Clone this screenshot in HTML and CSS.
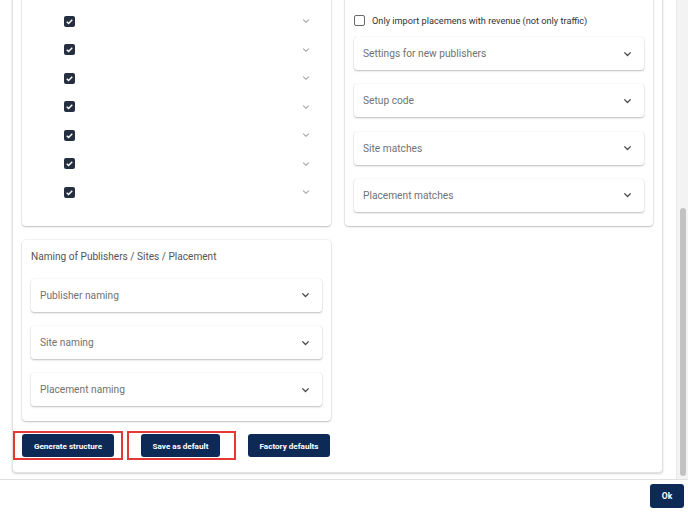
FILE: index.html
```html
<!DOCTYPE html>
<html>
<head>
<meta charset="utf-8">
<link rel="stylesheet" href="styles.css">
</head>
<body>
<div class="dialog">
  <div class="viewport">
    <div class="scroller">
      <div class="outer">
        <div class="grid">
          <div class="card card-checks">
            <div class="check-row"><span class="cb cb-on"><svg viewBox="0 0 12 12"><path d="M3 6.2l2 2 4-4.2" /></svg></span><svg class="chev chev-light" viewBox="0 0 10 6"><path d="M1.5 1.2l3.5 3.5 3.5-3.5"/></svg></div>
            <div class="check-row"><span class="cb cb-on"><svg viewBox="0 0 12 12"><path d="M3 6.2l2 2 4-4.2" /></svg></span><svg class="chev chev-light" viewBox="0 0 10 6"><path d="M1.5 1.2l3.5 3.5 3.5-3.5"/></svg></div>
            <div class="check-row"><span class="cb cb-on"><svg viewBox="0 0 12 12"><path d="M3 6.2l2 2 4-4.2" /></svg></span><svg class="chev chev-light" viewBox="0 0 10 6"><path d="M1.5 1.2l3.5 3.5 3.5-3.5"/></svg></div>
            <div class="check-row"><span class="cb cb-on"><svg viewBox="0 0 12 12"><path d="M3 6.2l2 2 4-4.2" /></svg></span><svg class="chev chev-light" viewBox="0 0 10 6"><path d="M1.5 1.2l3.5 3.5 3.5-3.5"/></svg></div>
            <div class="check-row"><span class="cb cb-on"><svg viewBox="0 0 12 12"><path d="M3 6.2l2 2 4-4.2" /></svg></span><svg class="chev chev-light" viewBox="0 0 10 6"><path d="M1.5 1.2l3.5 3.5 3.5-3.5"/></svg></div>
            <div class="check-row"><span class="cb cb-on"><svg viewBox="0 0 12 12"><path d="M3 6.2l2 2 4-4.2" /></svg></span><svg class="chev chev-light" viewBox="0 0 10 6"><path d="M1.5 1.2l3.5 3.5 3.5-3.5"/></svg></div>
            <div class="check-row"><span class="cb cb-on"><svg viewBox="0 0 12 12"><path d="M3 6.2l2 2 4-4.2" /></svg></span><svg class="chev chev-light" viewBox="0 0 10 6"><path d="M1.5 1.2l3.5 3.5 3.5-3.5"/></svg></div>
          </div>

          <div class="card card-right">
            <label class="opt-row"><span class="cb cb-off"></span><span class="opt-label">Only import placemens with revenue (not only traffic)</span></label>
            <div class="panels">
              <div class="panel"><span>Settings for new publishers</span><svg class="chev" viewBox="0 0 10 6"><path d="M1.5 1.2l3.5 3.5 3.5-3.5"/></svg></div>
              <div class="panel"><span>Setup code</span><svg class="chev" viewBox="0 0 10 6"><path d="M1.5 1.2l3.5 3.5 3.5-3.5"/></svg></div>
              <div class="panel"><span>Site matches</span><svg class="chev" viewBox="0 0 10 6"><path d="M1.5 1.2l3.5 3.5 3.5-3.5"/></svg></div>
              <div class="panel"><span>Placement matches</span><svg class="chev" viewBox="0 0 10 6"><path d="M1.5 1.2l3.5 3.5 3.5-3.5"/></svg></div>
            </div>
          </div>

          <div class="card card-naming">
            <div class="card-title">Naming of Publishers / Sites / Placement</div>
            <div class="panels">
              <div class="panel"><span>Publisher naming</span><svg class="chev" viewBox="0 0 10 6"><path d="M1.5 1.2l3.5 3.5 3.5-3.5"/></svg></div>
              <div class="panel"><span>Site naming</span><svg class="chev" viewBox="0 0 10 6"><path d="M1.5 1.2l3.5 3.5 3.5-3.5"/></svg></div>
              <div class="panel"><span>Placement naming</span><svg class="chev" viewBox="0 0 10 6"><path d="M1.5 1.2l3.5 3.5 3.5-3.5"/></svg></div>
            </div>
          </div>
        </div>

        <div class="actions">
          <span class="mark mark-1"><button class="btn btn-gen">Generate structure</button></span>
          <span class="mark mark-2"><button class="btn btn-save">Save as default</button></span>
          <button class="btn btn-factory">Factory defaults</button>
        </div>
      </div>
    </div>
    <div class="scrollbar"><div class="thumb"></div></div>
  </div>
  <div class="footer">
    <button class="btn btn-ok">Ok</button>
  </div>
</div>
</body>
</html>
```

FILE: styles.css
```css
* { box-sizing: border-box; }
html, body { margin: 0; padding: 0; background: #fff; }
body {
  width: 688px;
  height: 512px;
  overflow: hidden;
  font-family: Roboto, "Liberation Sans", sans-serif;
  color: #444;
}
.dialog {
  width: 688px;
  height: 512px;
  display: flex;
  flex-direction: column;
}
.viewport {
  height: 479px;
  overflow: hidden;
  position: relative;
  flex: none;
}
.scroller {
  margin-top: -20px;
  padding-left: 12px;
  width: 663px;
}
.outer {
  border: 1px solid #e2e2e2;
  border-radius: 4px;
  box-shadow: 0 1px 2px rgba(0,0,0,0.18);
  padding: 9px 8px 12px 9px;
  background: #fff;
}
.grid {
  display: grid;
  grid-template-columns: 309px 308px;
  column-gap: 14px;
  row-gap: 14px;
}
.card {
  border-radius: 4px;
  background: #fff;
  box-shadow: 0 1px 2px rgba(0,0,0,0.22), 0 0 0 1px rgba(0,0,0,0.04);
}
.card-checks {
  padding: 17px 21px 19px 42px;
}
.check-row {
  height: 28.5px;
  display: flex;
  align-items: center;
  justify-content: space-between;
}
.cb {
  width: 11px;
  height: 11px;
  border-radius: 2px;
  display: inline-flex;
  flex: none;
}
.cb-on {
  background: #262f3f;
}
.cb-on svg {
  width: 11px;
  height: 11px;
  fill: none;
  stroke: #fff;
  stroke-width: 1.6;
}
.cb-off {
  border: 1.5px solid #6a6a6a;
  border-radius: 2px;
}
.chev {
  width: 9px;
  height: 6px;
  fill: none;
  stroke: #4a4a4a;
  stroke-width: 1.5;
  flex: none;
}
.chev-light {
  width: 8px;
  stroke: #a0a0a0;
  stroke-width: 1.3;
}
.card-right {
  padding: 20px 9px 14px 9px;
}
.opt-row {
  height: 20px;
  display: flex;
  align-items: center;
  gap: 7px;
}
.opt-label {
  font-size: 9.2px;
  color: #333;
}
.panels {
  display: flex;
  flex-direction: column;
  gap: 14.3px;
}
.card-right .panels {
  margin-top: 7px;
}
.panel {
  height: 33px;
  border-radius: 3px;
  background: #fff;
  box-shadow: 0 1px 2px rgba(0,0,0,0.25), 0 0 1px rgba(0,0,0,0.12);
  display: flex;
  align-items: center;
  justify-content: space-between;
  padding: 0 12px 0 9px;
  font-size: 10.2px;
  color: #727272;
}
.card-naming {
  grid-column: 1;
  padding: 10px 9px 15px 9px;
}
.card-title {
  font-size: 10.1px;
  color: #555;
  height: 14px;
  line-height: 14px;
  margin-bottom: 15px;
}
.actions {
  display: flex;
  align-items: center;
  margin-top: 10px;
  margin-left: -9px;
}
.mark {
  border: 2px solid #e53935;
  padding: 1px 7px;
  display: inline-flex;
}
.mark-2 {
  margin-left: 4px;
  padding: 1px 14px 1px 12px;
}
.btn {
  background: #0d2a57;
  color: #fff;
  border: none;
  border-radius: 3px;
  height: 23px;
  font-family: Roboto, "Liberation Sans", sans-serif;
  font-weight: 700;
  font-size: 8.1px;
  padding: 0;
  cursor: pointer;
}
.btn-gen { width: 92px; }
.btn-save { width: 79px; }
.btn-factory { width: 82px; margin-left: 12px; }
.scrollbar {
  position: absolute;
  top: 0;
  right: 0;
  width: 12px;
  height: 479px;
  background: #f3f3f3;
  border-left: 1px solid #e8e8e8;
}
.thumb {
  position: absolute;
  left: 3px;
  width: 6px;
  top: 208px;
  height: 268px;
  border-radius: 3px;
  background: #c2c2c2;
}
.footer {
  flex: 1;
  border-top: 1px solid #e0e0e0;
  display: flex;
  justify-content: flex-end;
  align-items: flex-start;
  padding: 4px 4px 0 0;
}
.btn-ok {
  width: 34px;
  height: 24px;
  font-size: 8.5px;
}
```
